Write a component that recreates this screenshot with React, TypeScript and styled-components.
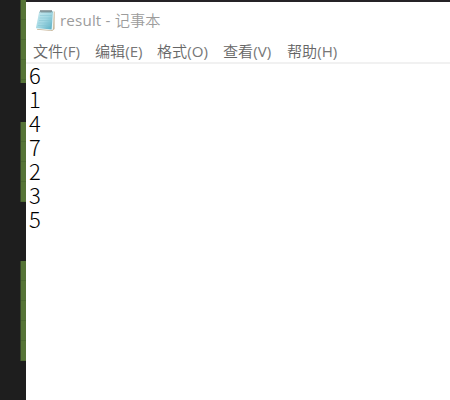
import React from "react";
import styled, { createGlobalStyle } from "styled-components";

const GlobalStyle = createGlobalStyle`
  body { margin: 0; overflow: hidden; background: #1e1e1e; }
`;
const Desktop = styled.main`
  display: flex;
  width: 450px;
  height: 400px;
  background: #1e1e1e;
`;
const EditorMargin = styled.div`
  display: flex;
  flex-direction: column;
  align-items: flex-end;
  width: 26px;
  flex: none;
`;
const ChangeMark = styled.div<{ $height: number; $gap: number }>`
  box-sizing: border-box;
  width: 6px;
  height: ${(p) => p.$height}px;
  margin-bottom: ${(p) => p.$gap}px;
  border-left: 1px solid #36452a;
  background: repeating-linear-gradient(#567437 0 19px, #4c6932 19px 20px);
`;
const NotepadWindow = styled.section`
  flex: 1;
  box-sizing: border-box;
  background: #fff;
  border-top: 2px solid #252326;
  font-family: "Open Sans", "Noto Sans CJK SC", sans-serif;
`;
const TitleBar = styled.header`
  display: flex;
  align-items: center;
  height: 37px;
  padding-left: 9px;
  gap: 4px;
`;
const Title = styled.h1`
  margin: 0 0 2px;
  font-size: 15.2px;
  font-weight: 400;
  line-height: 20px;
  letter-spacing: 0.15px;
  color: #9c9c9c;
  white-space: pre;
`;
const TitleName = styled.span`
  font-family: "Noto Sans CJK SC", sans-serif;
  font-weight: 350;
`;
const MenuBar = styled.nav`
  display: flex;
  box-sizing: border-box;
  height: 25px;
  padding-left: 7px;
  border-bottom: 2px solid #f1f1f1;
`;
const MenuItem = styled.span<{ $width: number }>`
  width: ${(p) => p.$width}px;
  flex: none;
  font-size: 15.1px;
  font-weight: 350;
  line-height: 24px;
  color: #666;
  white-space: nowrap;
`;
const AccessKey = styled.span`
  font-weight: 400;
  color: #777;
`;
const Document = styled.div`
  padding: 0 0 0 3px;
  font-family: "Noto Sans CJK SC", sans-serif;
  font-size: 22px;
  font-weight: 300;
  color: #000;
`;
const Line = styled.div`
  height: 24px;
  line-height: 21px;
`;

const NotepadIcon = () => (
  <svg width="21" height="23" viewBox="0 0 21 23">
    <defs>
      <linearGradient id="page" x1="0" y1="0" x2="1" y2="1">
        <stop offset="0" stopColor="#cbeaf0" />
        <stop offset="0.5" stopColor="#a3d8e3" />
        <stop offset="1" stopColor="#54abc1" />
      </linearGradient>
    </defs>
    <path d="M5 3 19.7 2.5 19.6 20 17.2 22 2 20.8Z" fill="#c9b79a" />
    <path d="M4.5 2.5 18.9 2.3 18 20.5 16 21.3 1 19.8Z" fill="#e9f6f7" />
    <path d="M4.2 2.5 18 2.3 16.6 20.4 1 19Z" fill="url(#page)" />
    <path d="M5 6.5h11.8M4.5 9h12M4 11.5h12M3.5 14h12M3 16.5h12" stroke="#83c3d0" strokeWidth=".5" />
    <path d="m5 3.5 1-2.5 1 2.5 1-2.5 1 2.5 1-2.5 1 2.5 1-2.5 1 2.5 1-2.5 1 2.5 1-2.5 1 2.5" fill="none" stroke="#66787d" strokeWidth=".8" />
  </svg>
);

const marks = [
  { height: 83, gap: 39 },
  { height: 80, gap: 59 },
  { height: 100, gap: 0 },
];
const menus = [
  { label: "文件", accessKey: "(F)", width: 62 },
  { label: "编辑", accessKey: "(E)", width: 62 },
  { label: "格式", accessKey: "(O)", width: 66 },
  { label: "查看", accessKey: "(V)", width: 64 },
  { label: "帮助", accessKey: "(H)", width: 60 },
];

export default function App() {
  return (
    <>
      <GlobalStyle />
      <Desktop>
        <EditorMargin>
          {marks.map((m, i) => (
            <ChangeMark key={i} $height={m.height} $gap={m.gap} />
          ))}
        </EditorMargin>
        <NotepadWindow>
          <TitleBar>
            <NotepadIcon />
            <Title>
              result - <TitleName>记事本</TitleName>
            </Title>
          </TitleBar>
          <MenuBar>
            {menus.map((m) => (
              <MenuItem key={m.label} $width={m.width}>
                {m.label}
                <AccessKey>{m.accessKey}</AccessKey>
              </MenuItem>
            ))}
          </MenuBar>
          <Document>
            {["6", "1", "4", "7", "2", "3", "5"].map((n) => (
              <Line key={n}>{n}</Line>
            ))}
          </Document>
        </NotepadWindow>
      </Desktop>
    </>
  );
}
